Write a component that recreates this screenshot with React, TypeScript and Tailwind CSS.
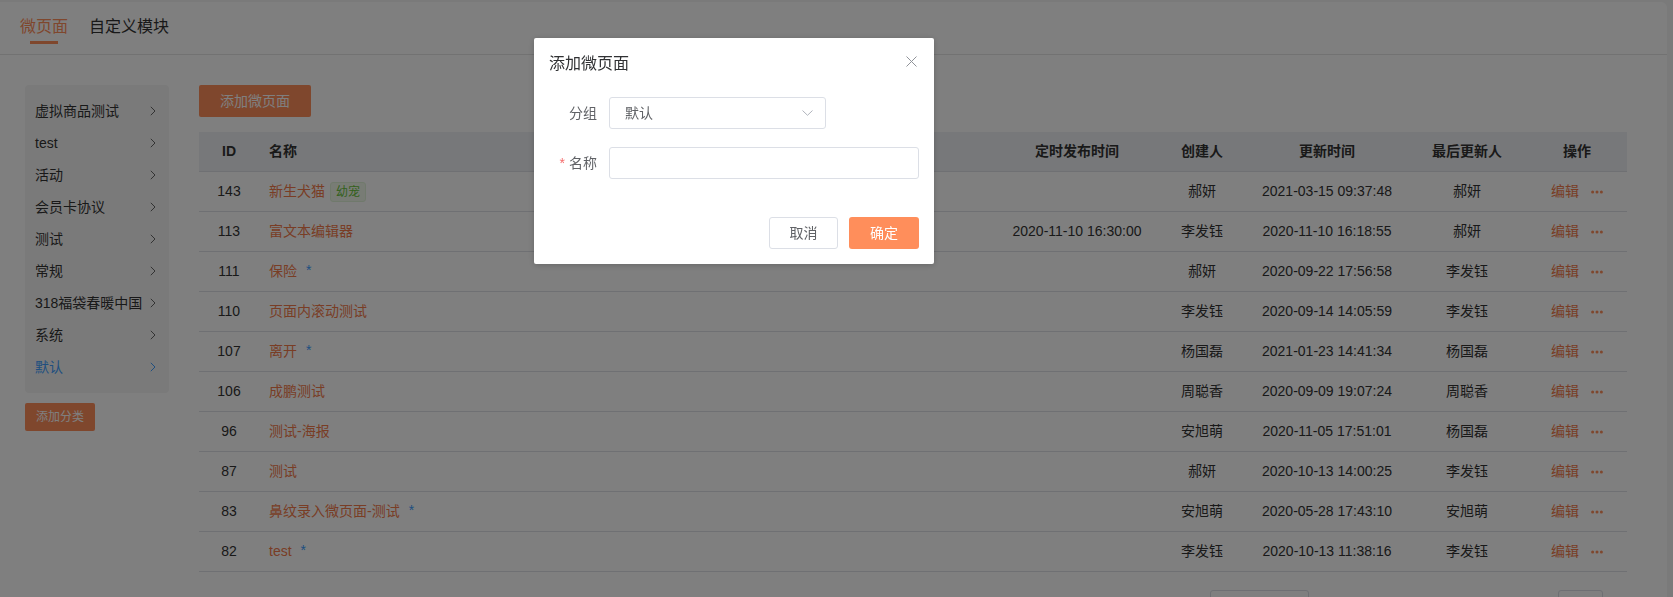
import { useState } from "react";

type Row = {
  id: number;
  name: string;
  tag?: string;
  star?: boolean;
  publishAt?: string;
  creator: string;
  updatedAt: string;
  updater: string;
};

const rows: Row[] = [
  { id: 143, name: "新生犬猫", tag: "幼宠", creator: "郝妍", updatedAt: "2021-03-15 09:37:48", updater: "郝妍" },
  { id: 113, name: "富文本编辑器", publishAt: "2020-11-10 16:30:00", creator: "李发钰", updatedAt: "2020-11-10 16:18:55", updater: "郝妍" },
  { id: 111, name: "保险", star: true, creator: "郝妍", updatedAt: "2020-09-22 17:56:58", updater: "李发钰" },
  { id: 110, name: "页面内滚动测试", creator: "李发钰", updatedAt: "2020-09-14 14:05:59", updater: "李发钰" },
  { id: 107, name: "离开", star: true, creator: "杨国磊", updatedAt: "2021-01-23 14:41:34", updater: "杨国磊" },
  { id: 106, name: "成鹏测试", creator: "周聪香", updatedAt: "2020-09-09 19:07:24", updater: "周聪香" },
  { id: 96, name: "测试-海报", creator: "安旭萌", updatedAt: "2020-11-05 17:51:01", updater: "杨国磊" },
  { id: 87, name: "测试", creator: "郝妍", updatedAt: "2020-10-13 14:00:25", updater: "李发钰" },
  { id: 83, name: "鼻纹录入微页面-测试", star: true, creator: "安旭萌", updatedAt: "2020-05-28 17:43:10", updater: "安旭萌" },
  { id: 82, name: "test", star: true, creator: "李发钰", updatedAt: "2020-10-13 11:38:16", updater: "李发钰" },
];

const groups = ["虚拟商品测试", "test", "活动", "会员卡协议", "测试", "常规", "318福袋春暖中国", "系统", "默认"];

const cols = "grid grid-cols-[60px_1fr_160px_90px_160px_120px_100px]";

const Chevron = ({ className }: { className?: string }) => (
  <svg width="6" height="10" viewBox="0 0 6 10" className={className}>
    <polyline points="0.8,0.8 5,5 0.8,9.2" fill="none" stroke="currentColor" strokeWidth="1" />
  </svg>
);

const Dots = () => (
  <svg width="12" height="4" viewBox="0 0 12 4" className="text-[#ff8e5b]">
    <circle cx="1.6" cy="2" r="1.5" fill="currentColor" />
    <circle cx="6" cy="2" r="1.5" fill="currentColor" />
    <circle cx="10.4" cy="2" r="1.5" fill="currentColor" />
  </svg>
);

export default function App() {
  const [active] = useState(8);

  return (
    <div className="h-[597px] overflow-hidden bg-[#f4f4f5] pt-[2px] pr-[6px] font-['Liberation_Sans','Noto_Sans_CJK_SC',sans-serif] text-[#333]">
      <div className="h-[700px] rounded-tr-[6px] bg-white">
        {/* tabs */}
        <div className="flex h-[53px] items-start gap-[21px] border-b border-[#e4e4e4] pl-[20px] pt-[13px] text-[16px]">
          <div className="flex flex-col items-center">
            <span className="leading-[24px] text-[#ff8e5b]">微页面</span>
            <span className="mt-[2px] h-[3px] w-[28px] bg-[#ff8e5b]" />
          </div>
          <span className="leading-[24px]">自定义模块</span>
        </div>

        <div className="flex gap-[30px] pl-[25px] pr-[40px] pt-[30px]">
          {/* group list */}
          <div className="w-[144px] shrink-0">
            <div className="rounded-[4px] bg-[#f5f5f5] py-[10px]">
              {groups.map((g, i) => (
                <div
                  key={g}
                  className={
                    "flex h-[32px] items-center justify-between pl-[10px] pr-[13px] text-[14px] " +
                    (i === active ? "text-[#409eff]" : "text-[#333]")
                  }
                >
                  <span>{g}</span>
                  <Chevron className={i === active ? "text-[#409eff]" : "text-[#666]"} />
                </div>
              ))}
            </div>
            <button className="mt-[10px] h-[28px] w-[70px] rounded-[2px] bg-[#ff8e5b] text-[12px] text-white">
              添加分类
            </button>
          </div>

          {/* page list */}
          <div className="flex-1">
            <button className="h-[32px] w-[112px] rounded-[2px] bg-[#ff8e5b] text-[14px] text-white">
              添加微页面
            </button>
            <div className="mt-[15px] text-[14px]">
              <div className={cols + " h-[40px] items-center border-b border-[#dfe1e6] bg-[#eef0f4] font-bold text-[#333]"}>
                <div className="text-center">ID</div>
                <div className="pl-[10px]">名称</div>
                <div className="text-center">定时发布时间</div>
                <div className="text-center">创建人</div>
                <div className="text-center">更新时间</div>
                <div className="text-center">最后更新人</div>
                <div className="text-center">操作</div>
              </div>
              {rows.map((r) => (
                <div key={r.id} className={cols + " h-[40px] items-center border-b border-[#dfe1e6]"}>
                  <div className="text-center">{r.id}</div>
                  <div className="flex items-center pl-[10px]">
                    <span className="text-[#f27a4a]">{r.name}</span>
                    {r.tag && (
                      <span className="ml-[5px] flex h-[20px] items-center rounded-[3px] border border-[#e1f3d8] bg-[#f0f9eb] px-[5px] text-[12px] text-[#67c23a]">
                        {r.tag}
                      </span>
                    )}
                    {r.star && <span className="ml-[9px] -mt-[3px] text-[14px] leading-none text-[#409eff]">*</span>}
                  </div>
                  <div className="text-center">{r.publishAt ?? ""}</div>
                  <div className="text-center">{r.creator}</div>
                  <div className="text-center">{r.updatedAt}</div>
                  <div className="text-center">{r.updater}</div>
                  <div className="flex items-center justify-center gap-[12px]">
                    <span className="text-[#f27a4a]">编辑</span>
                    <Dots />
                  </div>
                </div>
              ))}
              {/* pagination, only its top edge shows above the fold */}
              <div className="mt-[18px] flex items-center justify-end">
                <div className="h-[28px] w-[99px] rounded-[3px] border border-[#dcdfe6] bg-white" />
                <div className="w-[249px]" />
                <div className="h-[28px] w-[45px] rounded-[3px] border border-[#dcdfe6] bg-white" />
                <div className="w-[24px]" />
              </div>
            </div>
          </div>
        </div>
      </div>

      {/* modal */}
      <div className="fixed inset-0 z-10 bg-black/50" />
      <div className="fixed left-[534px] top-[38px] z-20 w-[400px] rounded-[2px] bg-white px-[15px] pb-[15px] pt-[14px] shadow-[0_1px_6px_rgba(0,0,0,0.2)]">
        <div className="flex h-[24px] items-center justify-between">
          <span className="text-[16px] text-[#303133]">添加微页面</span>
          <svg width="11" height="11" viewBox="0 0 11 11" className="mr-[2px] -mt-[6px] text-[#909399]">
            <path d="M0.5 0.5 L10.5 10.5 M10.5 0.5 L0.5 10.5" stroke="currentColor" strokeWidth="1" />
          </svg>
        </div>
        <div className="mt-[21px] flex items-center">
          <label className="w-[60px] pr-[12px] text-right text-[14px] text-[#606266]">分组</label>
          <div className="flex h-[32px] w-[217px] items-center justify-between rounded-[3px] border border-[#dcdfe6] pl-[15px] pr-[12px] text-[14px] text-[#606266]">
            <span>默认</span>
            <svg width="11" height="6" viewBox="0 0 11 6" className="text-[#b0b4bc]">
              <polyline points="0.5,0.5 5.5,5.3 10.5,0.5" fill="none" stroke="currentColor" strokeWidth="1" />
            </svg>
          </div>
        </div>
        <div className="mt-[18px] flex items-center">
          <label className="w-[60px] pr-[12px] text-right text-[14px] text-[#606266]">
            <span className="mr-[4px] text-[#f56c6c]">*</span>名称
          </label>
          <div className="h-[32px] flex-1 rounded-[3px] border border-[#dcdfe6]" />
        </div>
        <div className="mt-[38px] flex justify-end gap-[11px]">
          <button className="h-[32px] w-[69px] rounded-[3px] border border-[#dcdfe6] bg-white text-[14px] text-[#606266]">
            取消
          </button>
          <button className="h-[32px] w-[70px] rounded-[3px] bg-[#ff8e5b] text-[14px] text-white">确定</button>
        </div>
      </div>
    </div>
  );
}
